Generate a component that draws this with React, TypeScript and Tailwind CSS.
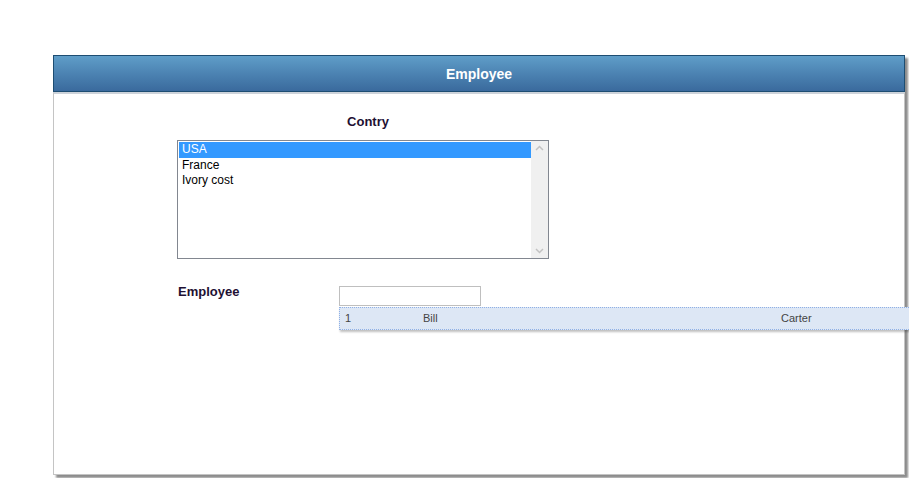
import React from "react";

export default function App() {
  const font = { fontFamily: "Tahoma, 'Liberation Sans', 'DejaVu Sans', sans-serif" };
  return (
    <div className="relative w-[909px] h-[478px] overflow-hidden bg-white" style={font}>
      <div className="pt-[55px] pl-[53px]">
        <div className="relative w-[852px] h-[420px] shadow-[3px_3px_2px_rgba(0,0,0,0.45)] bg-white flex flex-col">
          <div className="h-[37px] border border-[#1d4d72] bg-gradient-to-b from-[#5f9dc8] to-[#3a6a9d] flex items-center justify-center">
            <span className="text-white font-bold text-[14px] mt-[2px]">Employee</span>
          </div>
          <div className="flex-1 border-x border-b border-[#c4c4c4] border-t-2 border-t-[#cdd3da] relative">
            <div className="pl-[123px] pt-[15px]">
              <div className="w-[372px] text-center">
                <span className="inline-block ml-[10px] text-[13px] font-bold text-[#1e1033]">Contry</span>
              </div>
              <div className="mt-[7px] w-[372px] h-[119px] border border-[#828790] flex">
                <div className="flex-1 pt-px pl-px text-[12px] text-black leading-[15.5px]">
                  <div className="bg-[#3399ff] text-white pl-[3px] h-[15.5px]">USA</div>
                  <div className="pl-[3px]">France</div>
                  <div className="pl-[3px]">Ivory cost</div>
                </div>
                <div className="w-[17px] bg-[#f0f0f0] flex flex-col justify-between items-center py-[4px]">
                  <svg width="9" height="6" viewBox="0 0 9 6"><path d="M1 5 L4.5 1.5 L8 5" stroke="#c2c2c2" strokeWidth="1.5" fill="none" /></svg>
                  <svg width="9" height="6" viewBox="0 0 9 6"><path d="M1 1 L4.5 4.5 L8 1" stroke="#c2c2c2" strokeWidth="1.5" fill="none" /></svg>
                </div>
              </div>
              <div className="mt-[23px] flex items-start">
                <span className="w-[162px] text-[13px] font-bold text-[#1e1033] pl-px">Employee</span>
                <div className="w-[142px] h-[20px] mt-[4px] border border-[#bfbfbf] bg-white" />
              </div>
            </div>
          </div>
          <div className="absolute left-[286px] top-[252px] w-[620px] h-[23px] bg-[#dde7f5] border border-dotted border-[#8fb0e6] shadow-[1px_2px_2px_rgba(0,0,0,0.25)] flex items-center text-[11px] text-[#444]" style={{ fontFamily: "'Liberation Sans', Arial, sans-serif" }}>
            <span className="absolute left-[5px]">1</span>
            <span className="absolute left-[83px]">Bill</span>
            <span className="absolute left-[441px]">Carter</span>
          </div>
        </div>
      </div>
    </div>
  );
}
